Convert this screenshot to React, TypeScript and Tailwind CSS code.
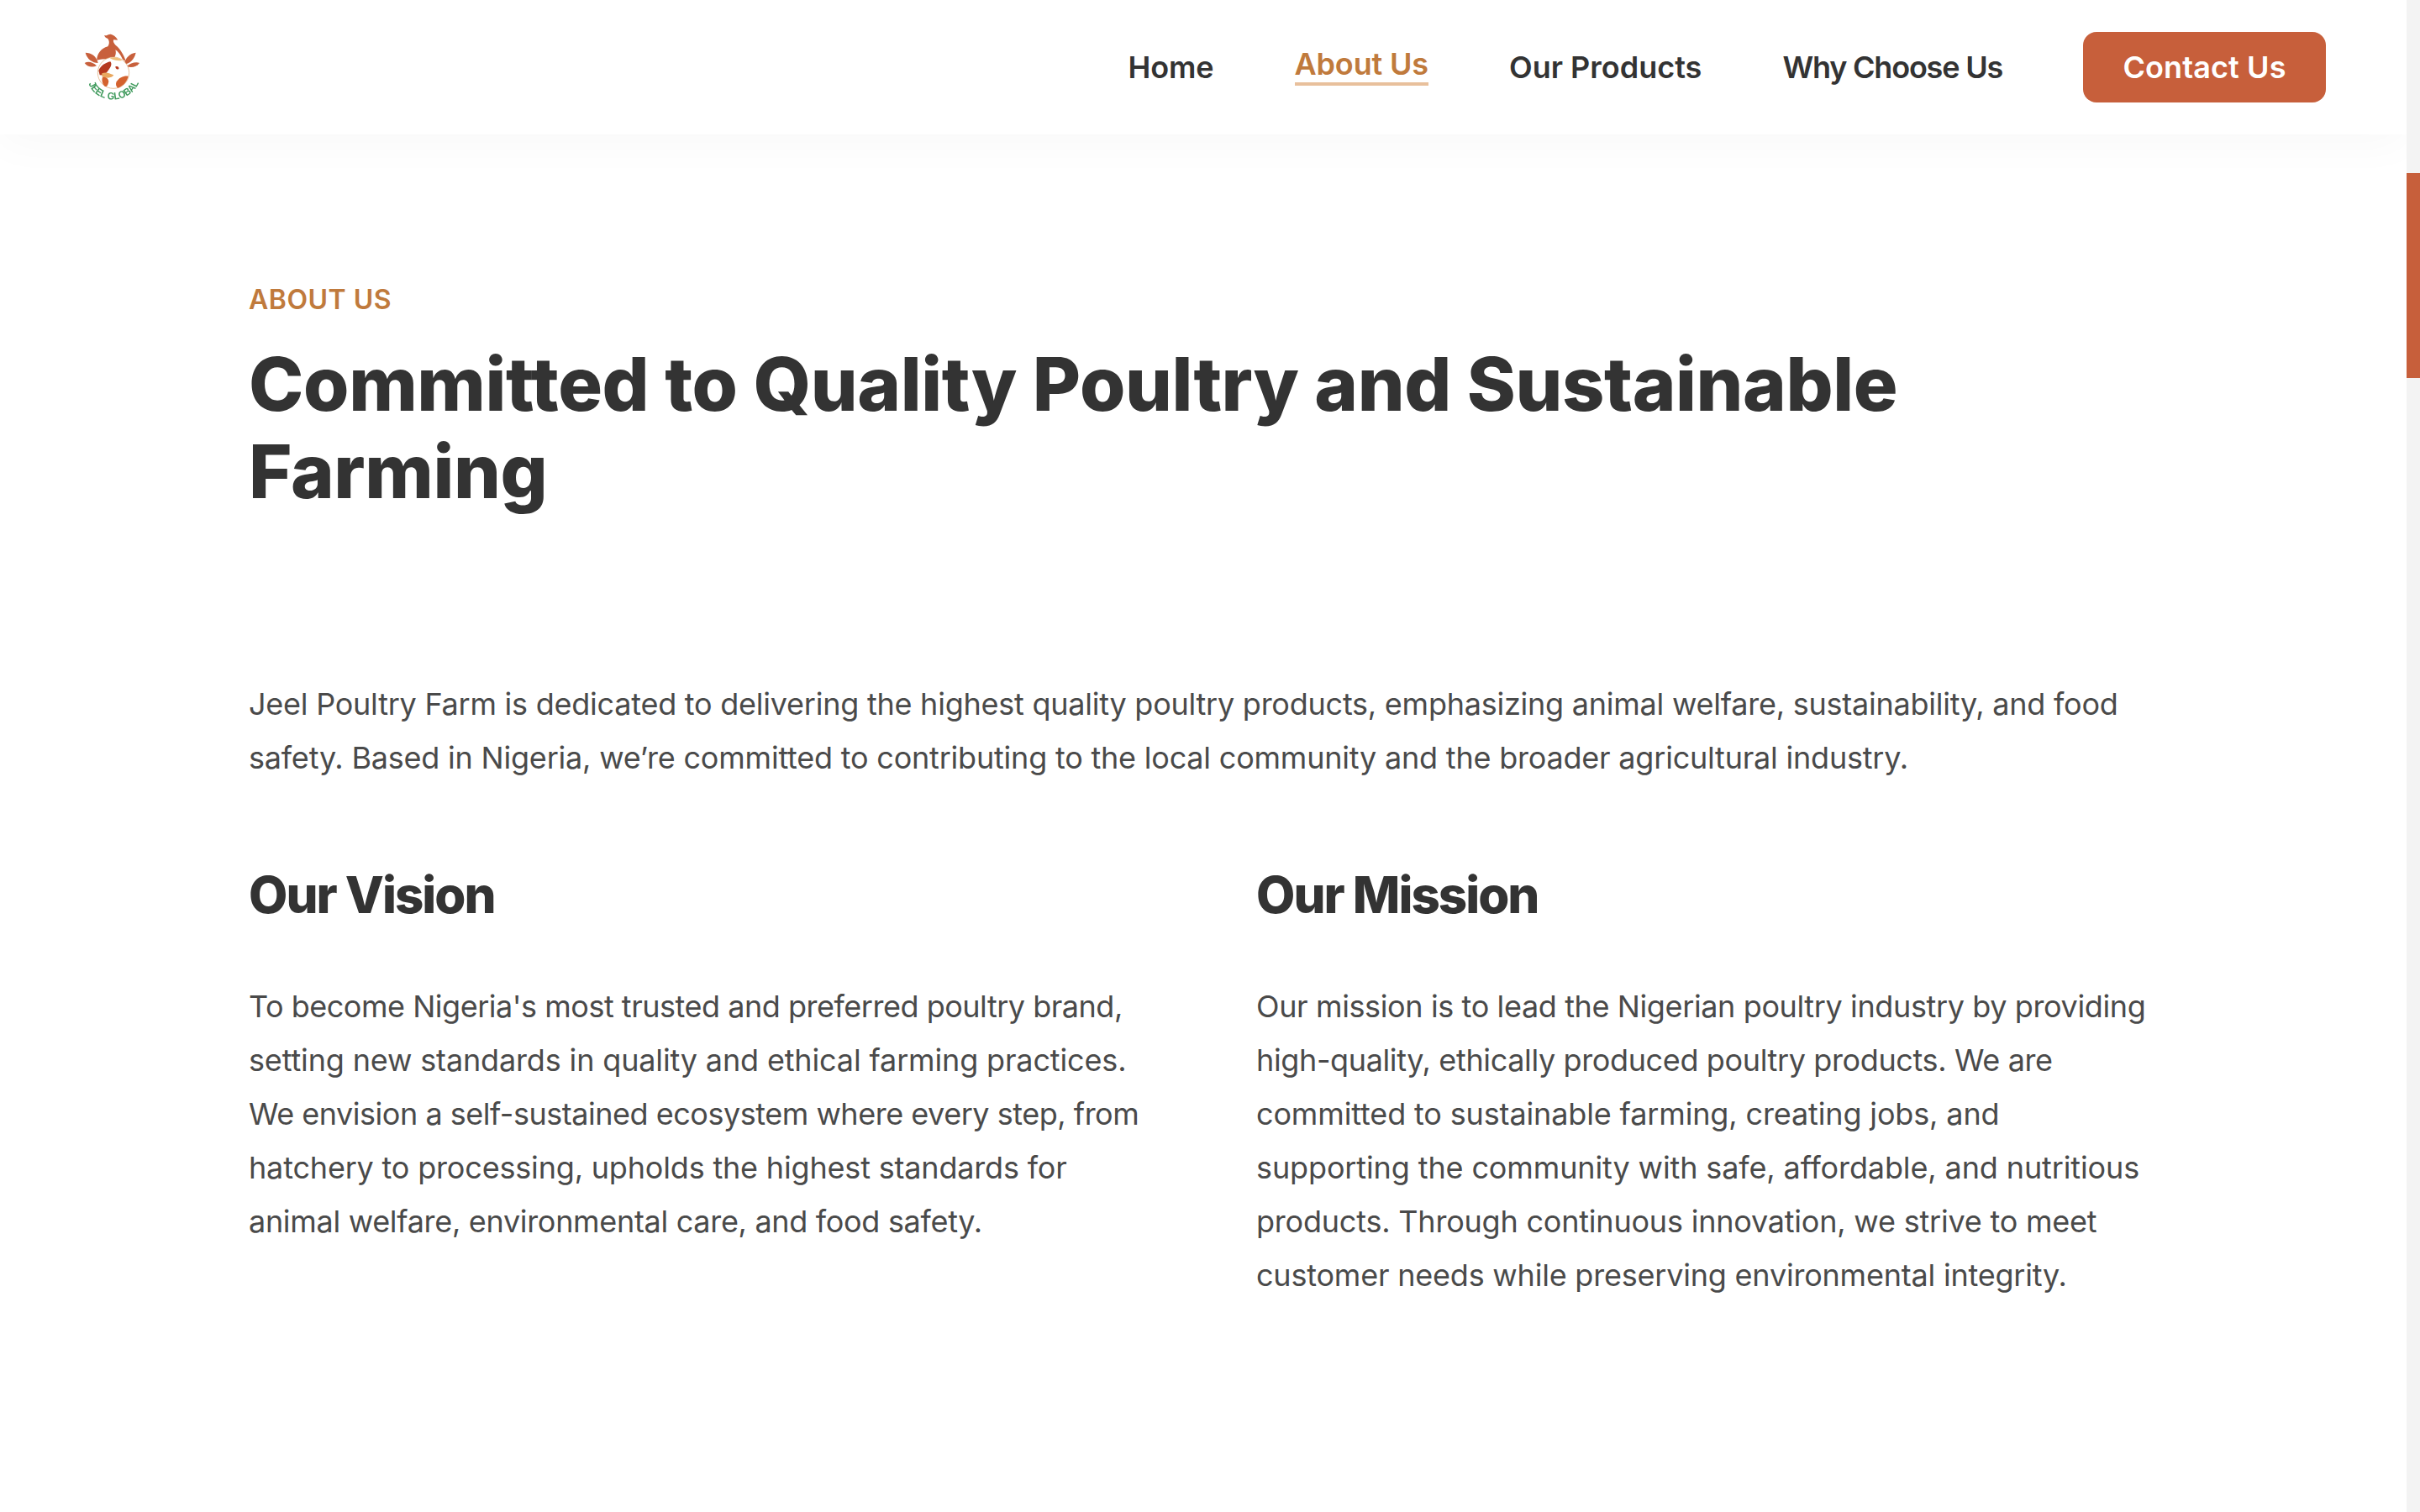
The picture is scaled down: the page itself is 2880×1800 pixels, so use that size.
const navItems = [
  { label: "Home", active: false, tracking: "tracking-[-0.1px]" },
  { label: "About Us", active: true, tracking: "tracking-[-0.15px]" },
  { label: "Our Products", active: false, tracking: "tracking-[0px]" },
  { label: "Why Choose Us", active: false, tracking: "tracking-[-1.2px]" },
];

function Logo() {
  return (
    <svg width="140" height="130" viewBox="0 0 420 390" className="block -mt-[10px] blur-[0.5px]">
      {/* leaves */}
      <path d="M125 158 C145 158 165 170 170 195 C150 195 130 180 125 158Z" fill="#c8603c" />
      <path d="M122 195 C135 188 152 192 165 205 C150 212 132 210 122 195Z" fill="#c8603c" />
      <path d="M305 158 C285 160 268 175 262 200 C285 198 300 180 305 158Z" fill="#c8603c" />
      <path d="M318 195 C305 190 285 195 272 208 C290 212 308 210 318 195Z" fill="#c8603c" />
      {/* bird */}
      <path d="M192 96 C200 100 205 92 215 92 C228 95 238 105 240 113 L226 112 C222 118 228 128 238 136 C250 148 262 165 270 190 L258 182 C250 165 240 152 232 148 C236 160 232 175 222 182 C205 178 180 182 166 185 C165 165 180 142 205 136 C212 125 210 115 205 108 C198 106 194 102 192 96Z" fill="#c8603c" />
      {/* globe */}
      <circle cx="225" cy="230" r="56" fill="#fff" stroke="#d9a066" strokeWidth="2" />
      <path d="M212 178 C225 172 245 175 256 186 C242 188 226 186 212 178Z" fill="#efc07a" />
      <path d="M172 222 C180 204 196 194 214 190 C222 200 214 212 206 222 C200 234 186 240 176 238Z" fill="#b5391f" />
      <path d="M184 232 C200 226 214 234 226 238 C220 250 200 250 184 244Z" fill="#e9a860" />
      <path d="M186 246 C198 242 206 250 208 260 C206 272 202 282 194 278 C186 270 182 258 186 246Z" fill="#d4622e" />
      <path d="M236 262 C246 246 262 240 278 242 C274 260 262 276 240 284 C234 278 232 270 236 262Z" fill="#d4622e" />
      <path d="M232 208 C240 204 246 210 244 216 C238 220 232 216 232 208Z" fill="#b5391f" />
      <path id="logo-arc" d="M136 268 C165 345 285 345 316 264" fill="none" />
      <text fontFamily="Liberation Sans, sans-serif" fontSize="36" fontWeight="700" fill="#3f9a5c">
        <textPath href="#logo-arc" textLength="228" lengthAdjust="spacingAndGlyphs">JEEL GLOBAL</textPath>
      </text>
    </svg>
  );
}

const visionLines = [
  { text: "To become Nigeria's most trusted and preferred poultry brand,", tracking: "tracking-[-0.48px]" },
  { text: "setting new standards in quality and ethical farming practices.", tracking: "tracking-[-0.15px]" },
  { text: "We envision a self-sustained ecosystem where every step, from", tracking: "tracking-[-0.48px]" },
  { text: "hatchery to processing, upholds the highest standards for", tracking: "tracking-[-0.18px]" },
  { text: "animal welfare, environmental care, and food safety.", tracking: "tracking-[-0.31px]" },
];

const missionLines = [
  { text: "Our mission is to lead the Nigerian poultry industry by providing", tracking: "tracking-[-0.38px]" },
  { text: "high-quality, ethically produced poultry products. We are", tracking: "tracking-[-0.37px]" },
  { text: "committed to sustainable farming, creating jobs, and", tracking: "tracking-[-0.14px]" },
  { text: "supporting the community with safe, affordable, and nutritious", tracking: "tracking-[-0.12px]" },
  { text: "products. Through continuous innovation, we strive to meet", tracking: "tracking-[-0.21px]" },
  { text: "customer needs while preserving environmental integrity.", tracking: "tracking-[-0.21px]" },
];

function Column({ title, lines }: { title: string; lines: { text: string; tracking: string }[] }) {
  return (
    <div className="w-[1199px] shrink-0">
      <h2 className="text-[60px] leading-[80px] font-extrabold text-[#333333] tracking-[-2px]">{title}</h2>
      <div className="mt-[61px]">
        {lines.map((line) => (
          <p key={line.text} className={`text-[36px] leading-[64px] text-[#4a4a4a] whitespace-nowrap ${line.tracking}`}>{line.text}</p>
        ))}
      </div>
    </div>
  );
}

export default function App() {
  return (
    <div className="flex h-[1800px] w-full overflow-hidden bg-white font-['Inter',sans-serif]">
      <div className="flex-1 min-w-0">
        <header className="flex h-[160px] items-center justify-between pl-[60px] pr-[96px] bg-white shadow-[0_10px_50px_rgba(0,0,0,0.03)]">
          <Logo />
          <nav className="flex items-center gap-[96px]">
            {navItems.map((item) => (
              <a
                key={item.label}
                className={
                  item.active
                    ? `text-[36px] leading-[44px] font-semibold text-[#c07a3c] border-b-[4px] border-[#e8c09c] -mt-[4px] ${item.tracking}`
                    : `text-[36px] leading-[44px] font-semibold text-[#333333] ${item.tracking}`
                }
              >
                {item.label}
              </a>
            ))}
            <a className="flex h-[84px] w-[289px] items-center justify-center rounded-[16px] bg-[#c75f3b] text-[36px] font-semibold text-white tracking-[0.1px]">
              Contact Us
            </a>
          </nav>
        </header>

        <main className="pl-[296px] pt-[177px]">
          <p className="text-[32px] leading-[40px] font-semibold text-[#c07a3c] tracking-[0.5px]">ABOUT US</p>
          <h1 className="mt-[28px] text-[88px] leading-[104px] font-extrabold text-[#333333] tracking-[-0.4px]">
            Committed to Quality Poultry and Sustainable
            <br />
            Farming
          </h1>
          <div className="mt-[193px]">
            <p className="text-[36px] leading-[64px] text-[#4a4a4a] whitespace-nowrap tracking-[-0.24px]">
              Jeel Poultry Farm is dedicated to delivering the highest quality poultry products, emphasizing animal welfare, sustainability, and food
            </p>
            <p className="text-[36px] leading-[64px] text-[#4a4a4a] whitespace-nowrap tracking-[-0.21px]">
              safety. Based in Nigeria, we’re committed to contributing to the local community and the broader agricultural industry.
            </p>
          </div>
          <div className="mt-[91px] flex">
            <Column title="Our Vision" lines={visionLines} />
            <Column title="Our Mission" lines={missionLines} />
          </div>
        </main>
      </div>

      <div className="w-[16px] shrink-0 bg-[#f3f3f3]">
        <div className="mt-[206px] h-[244px] bg-[#c75f3b]" />
      </div>
    </div>
  );
}
